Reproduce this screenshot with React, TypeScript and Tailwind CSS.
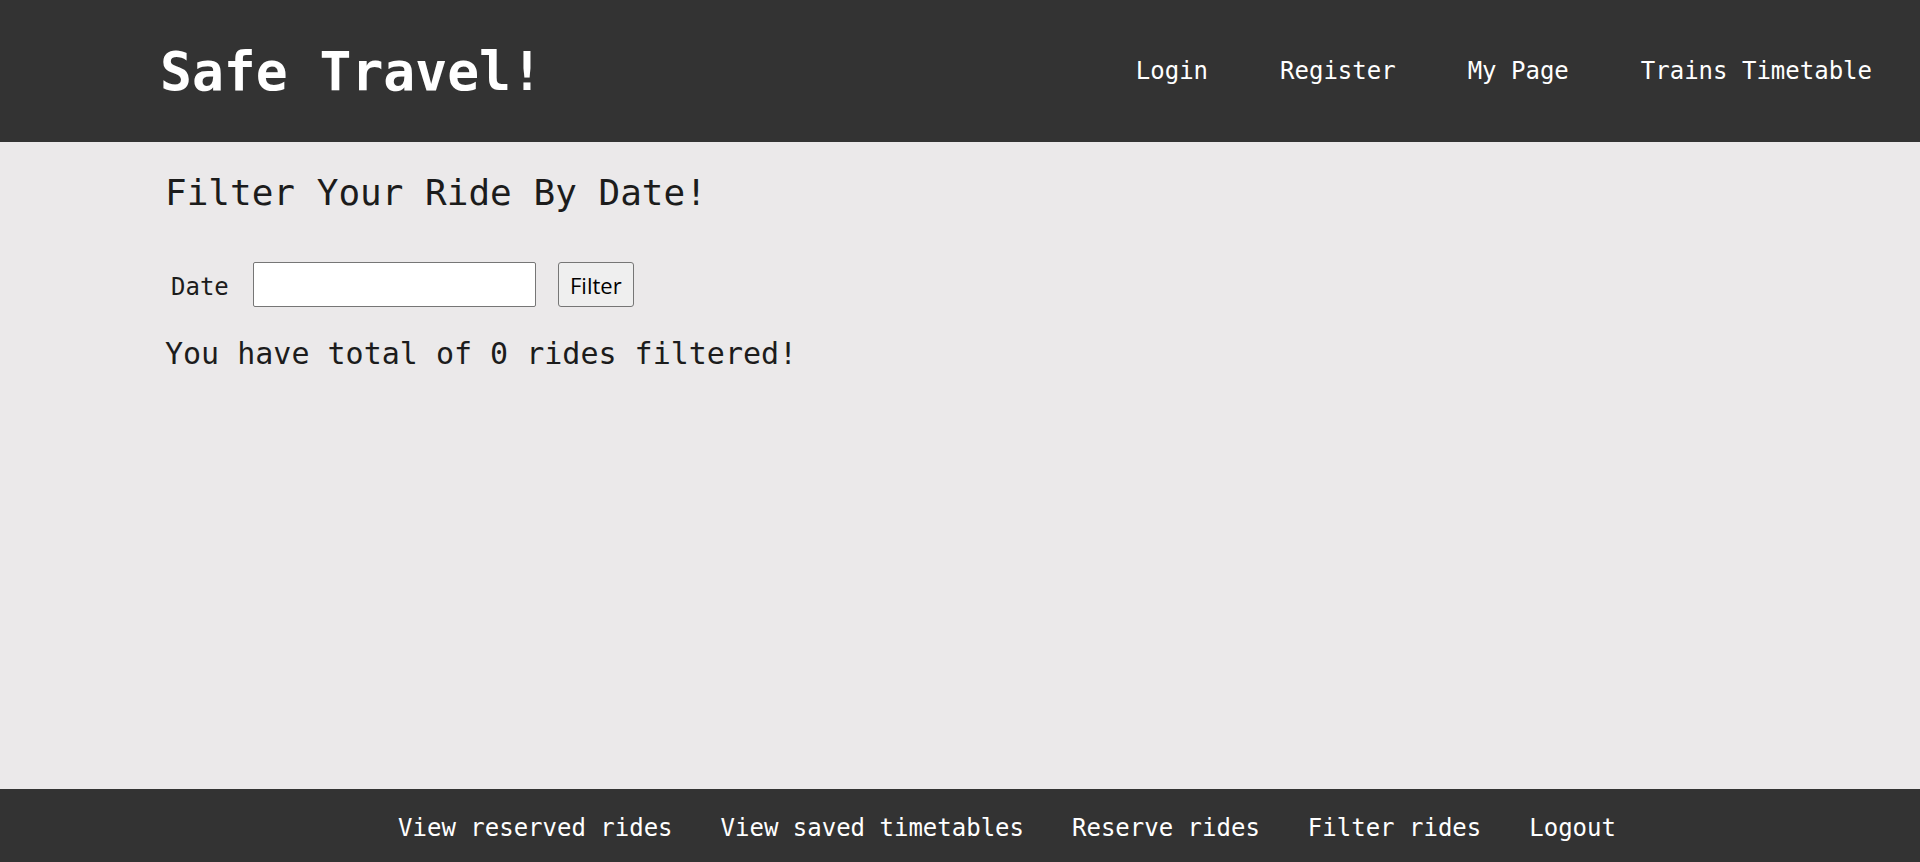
import React from "react";

const mono = { fontFamily: '"DejaVu Sans Mono", monospace' };

export default function App() {
  return (
    <div className="min-h-screen flex flex-col bg-[#ebe9ea] text-[#1c1c1c]" style={mono}>
      <header className="h-[142px] bg-[#333333] flex items-center justify-between pl-[160px] pr-[48px]">
        <h1 className="text-[53px] font-bold leading-none text-white">Safe Travel!</h1>
        <nav>
          <ul className="flex gap-[72px] text-[24px] leading-none text-white">
            <li>Login</li>
            <li>Register</li>
            <li>My Page</li>
            <li>Trains Timetable</li>
          </ul>
        </nav>
      </header>
      <main className="flex-1 pl-[165px] pt-[33px]">
        <h2 className="text-[36px] leading-none">Filter Your Ride By Date!</h2>
        <div className="mt-[51px] flex items-center">
          <label className="ml-[6px] mr-[24px] text-[24px] leading-none pt-[4px]">Date</label>
          <input
            type="text"
            className="w-[283px] h-[45px] border border-[#767676] rounded-[2px] bg-white outline-none"
          />
          <button
            className="ml-[22px] w-[76px] h-[45px] border border-[#767676] rounded-[3px] bg-[#efefef] text-[22px] text-black leading-none"
            style={{ fontFamily: '"Open Sans", sans-serif' }}
          >
            Filter
          </button>
        </div>
        <p className="mt-[32px] text-[30px] leading-none">You have total of 0 rides filtered!</p>
      </main>
      <footer className="h-[73px] bg-[#333333] flex items-center justify-center pl-[94px]">
        <ul className="flex gap-[48px] text-[24px] leading-none text-white pt-[4px]">
          <li>View reserved rides</li>
          <li>View saved timetables</li>
          <li>Reserve rides</li>
          <li>Filter rides</li>
          <li>Logout</li>
        </ul>
      </footer>
    </div>
  );
}
